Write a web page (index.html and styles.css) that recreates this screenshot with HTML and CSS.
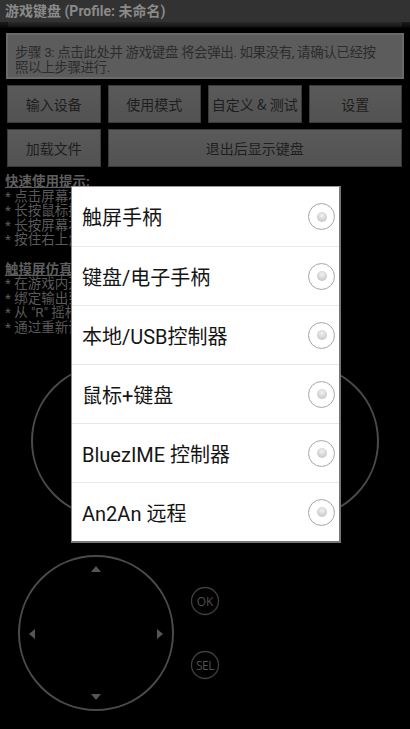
FILE: index.html
```html
<!DOCTYPE html>
<html lang="zh-CN">
<head>
<meta charset="utf-8">
<title>游戏键盘</title>
<link rel="stylesheet" href="styles.css">
</head>
<body>
<div class="screen">
  <div class="titlebar">游戏键盘 (Profile: 未命名)</div>
  <div class="progress"><div class="progress-bar"></div></div>
  <div class="step">步骤 3: 点击此处并 游戏键盘 将会弹出. 如果没有, 请确认已经按<br>照以上步骤进行.</div>
  <div class="buttons">
    <div class="btn">输入设备</div>
    <div class="btn">使用模式</div>
    <div class="btn cjk">自定义 &amp; 测试</div>
    <div class="btn">设置</div>
    <div class="btn">加载文件</div>
    <div class="btn wide">退出后显示键盘</div>
  </div>
  <div class="tips">
    <div class="tip-head">快速使用提示:</div>
    <div>* 点击屏幕右上角切换布局</div>
    <div>* 长按鼠标拖动调整大小</div>
    <div>* 长按屏幕右侧打开菜单</div>
    <div>* 按住右上角移动按钮</div>
    <div class="blank">&nbsp;</div>
    <div class="tip-head">触摸屏仿真控制器:</div>
    <div>* 在游戏内开启控制器支持</div>
    <div>* 绑定输出到虚拟控制器</div>
    <div>* 从 "R" 摇杆控制视角</div>
    <div>* 通过重新调整来校准</div>
  </div>
  <svg class="pad" viewBox="0 340 410 389" width="410" height="389">
    <g fill="none" stroke="#4a4a4a" stroke-width="2">
      <circle cx="108" cy="441" r="76"/>
      <circle cx="302" cy="441" r="76"/>
      <circle cx="96" cy="633" r="77"/>
    </g>
    <g fill="none" stroke="#3f3f3f" stroke-width="1.3">
      <circle cx="205" cy="601" r="13.5"/>
      <circle cx="205" cy="665" r="13.5"/>
    </g>
    <g fill="#555">
      <polygon points="91,572 101,572 96,566"/>
      <polygon points="91,694 101,694 96,700"/>
      <polygon points="35,629 35,639 29,634"/>
      <polygon points="157,629 157,639 163,634"/>
    </g>
    <g fill="#505050" font-family="'Open Sans', 'Liberation Sans', sans-serif" font-size="12" text-anchor="middle">
      <text x="205" y="605.5">OK</text>
      <text x="205" y="669.5" letter-spacing="-0.5">SEL</text>
    </g>
  </svg>

  <div class="dialog">
    <div class="item"><span>触屏手柄</span><i class="radio"></i></div>
    <div class="item"><span>键盘/电子手柄</span><i class="radio"></i></div>
    <div class="item"><span>本地/USB控制器</span><i class="radio"></i></div>
    <div class="item"><span>鼠标+键盘</span><i class="radio"></i></div>
    <div class="item"><span>BluezIME 控制器</span><i class="radio"></i></div>
    <div class="item"><span>An2An 远程</span><i class="radio"></i></div>
  </div>
</div>
</body>
</html>
```
FILE: styles.css
```css
html, body {
  margin: 0;
  padding: 0;
  background: #000;
}
body {
  font-family: Roboto, "Noto Sans CJK SC", sans-serif;
  width: 410px;
  height: 729px;
  overflow: hidden;
}
.screen {
  position: relative;
  width: 410px;
  height: 729px;
  overflow: hidden;
  background: #000;
}
.titlebar {
  height: 22px;
  line-height: 22px;
  background: #323232;
  color: #8a8a8a;
  font-weight: bold;
  font-size: 14px;
  padding-left: 5px;
  white-space: nowrap;
}
.progress {
  height: 6px;
  background: linear-gradient(#1c1c1c, #050505);
  padding: 0 8px;
}
.progress-bar {
  height: 5px;
  background: linear-gradient(#2a2a2a, #141414);
}
.step {
  margin: 5px 6px 0 6px;
  height: 46px;
  box-sizing: border-box;
  border: 2px solid #6a6a6a;
  background: #5c5c5c;
  color: #2c2c2c;
  font-size: 13.5px;
  letter-spacing: -0.4px;
  line-height: 15px;
  padding: 10px 0 0 7px;
  white-space: nowrap;
  overflow: hidden;
}
.buttons {
  display: grid;
  grid-template-columns: repeat(4, 1fr);
  column-gap: 7px;
  row-gap: 6px;
  padding: 6px 8px 0 7px;
}
.btn {
  height: 38px;
  box-sizing: border-box;
  border: 1px solid #3a3a3a;
  background: linear-gradient(#5a5a5a, #525252);
  color: #1e1e1e;
  font-size: 14px;
  display: flex;
  align-items: center;
  justify-content: center;
  white-space: nowrap;
}
.btn.cjk {
  font-family: "Noto Sans CJK SC", sans-serif;
  color: #1e1e1e;
}
.btn.wide {
  grid-column: span 3;
}
.tips {
  height: 173px;
  box-sizing: border-box;
  padding: 7px 0 0 5px;
  color: #5a5a5a;
  font-size: 13.5px;
  line-height: 14.6px;
  white-space: nowrap;
}
.tip-head {
  font-weight: bold;
  text-decoration: underline;
  color: #5e5e5e;
}
.pad {
  display: block;
}
.dialog {
  position: absolute;
  left: 71px;
  top: 186px;
  width: 270px;
  box-sizing: border-box;
  background: #fff;
  border-left: 1px solid #8a8a8a;
  border-right: 2px solid #767676;
  border-bottom: 2px solid #767676;
  border-top: 1px solid #9a9a9a;
}
.item {
  height: 59px;
  box-sizing: border-box;
  display: flex;
  align-items: center;
  justify-content: space-between;
  padding: 0 4px 0 10px;
  border-top: 1px solid #e8e8e8;
  font-size: 20px;
  color: #151515;
}
.item:first-child {
  border-top: none;
}
.radio {
  display: block;
  width: 27px;
  height: 27px;
  box-sizing: border-box;
  border-radius: 50%;
  border: 1.5px solid #a8a8a8;
  background: radial-gradient(circle at 50% 50%, #fff 0, #fff 60%, #ececec 100%);
  position: relative;
}
.radio::after {
  content: "";
  position: absolute;
  left: 50%;
  top: 50%;
  width: 10px;
  height: 10px;
  margin: -5px 0 0 -5px;
  border-radius: 50%;
  background: radial-gradient(circle at 50% 35%, #f2f2f2 0, #cbcbcb 70%, #b8b8b8 100%);
}
```
